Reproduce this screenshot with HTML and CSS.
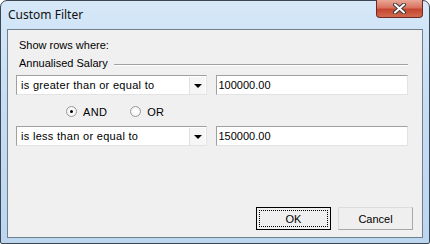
FILE: index.html
```html
<!DOCTYPE html>
<html lang="en">

<head>
    <meta charset="UTF-8">
    <title>Custom Filter</title>
    <link rel="stylesheet" href="styles.css">
</head>

<body>
    <div class="window">
        <div class="titlebar">
            <span class="title">Custom Filter</span>
            <button class="close">
                <svg width="17" height="11" viewBox="0 0 17 11">
                    <path d="M4 1.5 L13 9.5 M13 1.5 L4 9.5" stroke="#3a3a3a" stroke-width="4" stroke-linecap="round"/>
                    <path d="M4 1.5 L13 9.5 M13 1.5 L4 9.5" stroke="#ffffff" stroke-width="2" stroke-linecap="round"/>
                </svg>
            </button>
        </div>
        <div class="client">
            <div class="label first">Show rows where:</div>
            <div class="group">
                <span>Annualised Salary</span>
                <div class="rule"></div>
            </div>
            <div class="row">
                <div class="combo">
                    <span>is greater than or equal to</span>
                    <div class="arrow"></div>
                </div>
                <div class="textbox">100000.00</div>
            </div>
            <div class="radios">
                <div class="radio checked"><i></i>AND</div>
                <div class="radio"><i></i>OR</div>
            </div>
            <div class="row">
                <div class="combo">
                    <span>is less than or equal to</span>
                    <div class="arrow"></div>
                </div>
                <div class="textbox">150000.00</div>
            </div>
            <div class="buttons">
                <button class="btn default"><span>OK</span></button>
                <button class="btn">Cancel</button>
            </div>
        </div>
    </div>
</body>

</html>
```

FILE: styles.css
```css
* {
    padding: 0;
    margin: 0;
    box-sizing: border-box;
}

body {
    background: #ffffff;
    font-family: "Liberation Sans", Arial, sans-serif;
    font-size: 11px;
    color: #000;
}

.window {
    width: 430px;
    height: 244px;
    border: 1px solid #3b4652;
    border-radius: 7px 7px 2px 2px;
    background: linear-gradient(180deg, #d6e8f8 0%, #c6def3 40%, #bcd6f0 100%);
    padding: 0 6px 5px 6px;
    display: flex;
    flex-direction: column;
}

.titlebar {
    height: 28px;
    display: flex;
    align-items: flex-start;
    justify-content: space-between;
}

.title {
    font-family: "Noto Sans", sans-serif;
    font-size: 12px;
    margin-top: 5px;
    margin-left: 1px;
    color: #111;
}

.close {
    width: 47px;
    height: 18px;
    margin-top: -1px;
    border: 1px solid #6e2a22;
    border-top: none;
    border-radius: 0 0 4px 4px;
    background: linear-gradient(180deg, #e9a896 0%, #d9735f 45%, #c6452f 55%, #d16a4e 100%);
    display: flex;
    align-items: center;
    justify-content: center;
}

.client {
    flex: 1;
    border: 1px solid #6f7f90;
    background: #f0f0f0;
    padding: 9px 14px 7px 8px;
    display: flex;
    flex-direction: column;
}

.label {
    margin-left: 3px;
    line-height: 13px;
}

.group {
    display: flex;
    align-items: center;
    margin-top: 5px;
    margin-left: 3px;
    line-height: 13px;
}

.rule {
    flex: 1;
    margin-left: 6px;
    margin-top: 2px;
    border-top: 1px solid #a0a0a0;
    border-bottom: 1px solid #ffffff;
}

.row {
    display: flex;
    gap: 9px;
    height: 20px;
}

.group + .row {
    margin-top: 5px;
}

.combo {
    width: 191px;
    background: #fff;
    border: 1px solid #a0a0a0;
    border-right-color: #e3e3e3;
    border-bottom-color: #e3e3e3;
    display: flex;
    align-items: center;
    justify-content: space-between;
    padding-left: 4px;
    letter-spacing: 0.3px;
}

.arrow {
    width: 16px;
    height: 17px;
    margin-right: 1px;
    border-left: 1px solid #e0e0e0;
    background: #f6f6f6;
    position: relative;
}

.arrow::after {
    content: "";
    position: absolute;
    left: 4px;
    top: 7px;
    border-left: 4px solid transparent;
    border-right: 4px solid transparent;
    border-top: 4px solid #000;
}

.textbox {
    width: 193px;
    background: #fff;
    border: 1px solid #a0a0a0;
    border-right-color: #e3e3e3;
    border-bottom-color: #e3e3e3;
    padding-left: 2px;
    display: flex;
    align-items: center;
}

.radios {
    display: flex;
    height: 31px;
    align-items: center;
    padding-top: 2px;
    padding-left: 50px;
    gap: 23px;
}

.radio {
    display: flex;
    align-items: center;
    letter-spacing: 0.3px;
}

.radio i {
    width: 11px;
    height: 11px;
    border-radius: 50%;
    border: 1px solid #9a9a9a;
    background: radial-gradient(circle, #ffffff 30%, #e8e8e8 100%);
    margin-right: 6px;
    position: relative;
}

.radio.checked i::after {
    content: "";
    position: absolute;
    left: 3px;
    top: 3px;
    width: 3px;
    height: 3px;
    border-radius: 50%;
    background: #000;
}

.buttons {
    margin-top: auto;
    display: flex;
    justify-content: flex-end;
    gap: 7px;
    margin-right: -5px;
}

.btn {
    width: 75px;
    height: 23px;
    font-family: "Liberation Sans", Arial, sans-serif;
    font-size: 11px;
    background: #efefef;
    border: 1px solid #dcdcdc;
    border-right-color: #a8a8a8;
    border-bottom-color: #a8a8a8;
    color: #000;
}

.btn.default {
    border: 1px solid #000;
    padding: 2px;
}

.btn.default span {
    display: flex;
    height: 100%;
    align-items: center;
    justify-content: center;
    border: 1px dotted #000;
}
```
